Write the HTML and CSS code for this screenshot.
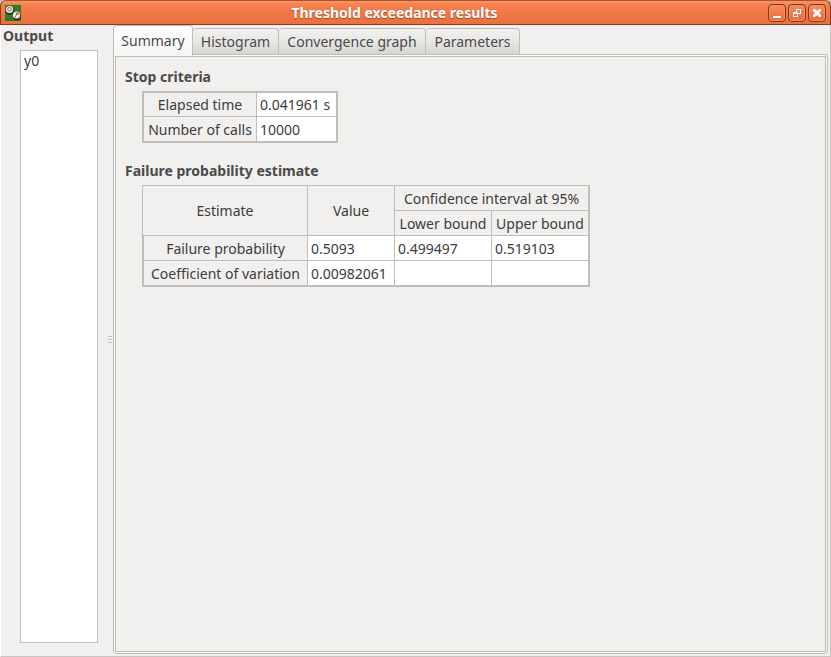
FILE: index.html
```html
<!DOCTYPE html>
<html lang="en">
<head>
<meta charset="utf-8">
<title>Threshold exceedance results</title>
<link rel="stylesheet" href="styles.css">
</head>
<body>
<div class="window">
  <header class="titlebar">
    <svg class="app-icon" viewBox="0 0 16 16" aria-hidden="true">
      <rect width="16" height="16" fill="#2f7d28"/>
      <ellipse cx="5" cy="6" rx="4.6" ry="4" fill="#1d3d18"/>
      <ellipse cx="12" cy="11.5" rx="4" ry="3.8" fill="#1d3d18"/>
      <circle cx="4.5" cy="4.5" r="3.6" fill="#f4eeea"/>
      <circle cx="4.5" cy="4.3" r="1.8" fill="none" stroke="#c8383a"/>
      <circle cx="11.5" cy="10" r="3.6" fill="#f4eeea"/>
      <path d="M10 12.5l2.5-5M11 8.5l2.5-.5-.5 2" fill="none" stroke="#d0403c"/>
    </svg>
    <h1 class="title">Threshold exceedance results</h1>
    <div class="controls">
      <button class="control" type="button" aria-label="Minimize"><svg viewBox="0 0 16 16"><path d="M4 11h8v2H4z"/></svg></button>
      <button class="control" type="button" aria-label="Restore"><svg viewBox="0 0 16 16"><path fill-rule="evenodd" d="M7 4h5v5h-3v3H4V7h3zM8 5v2h1v1h2V5zM5 9v2h3V9z"/></svg></button>
      <button class="control" type="button" aria-label="Close"><svg viewBox="0 0 16 16"><path d="M4 4h2l2 2 2-2h2v2l-2 2 2 2v2h-2l-2-2-2 2H4v-2l2-2-2-2z"/></svg></button>
    </div>
  </header>
  <main class="content">
    <aside class="sidebar">
      <h2 class="heading" id="output-label">Output</h2>
      <ul class="outputs" aria-labelledby="output-label"><li>y0</li></ul>
    </aside>
    <div class="splitter"><i></i><i></i><i></i></div>
    <section class="results">
      <div class="tabs" role="tablist">
        <button class="tab active" type="button" role="tab" aria-selected="true">Summary</button>
        <button class="tab tab-histogram" type="button" role="tab">Histogram</button>
        <button class="tab tab-convergence" type="button" role="tab">Convergence graph</button>
        <button class="tab tab-parameters" type="button" role="tab">Parameters</button>
      </div>
      <div class="frame">
        <div class="panel" role="tabpanel">
          <h2 class="heading">Stop criteria</h2>
          <table class="grid stop">
            <colgroup><col class="c-name"><col class="c-data"></colgroup>
            <tbody>
              <tr><th scope="row">Elapsed time</th><td>0.041961 s</td></tr>
              <tr><th scope="row">Number of calls</th><td>10000</td></tr>
            </tbody>
          </table>
          <h2 class="heading">Failure probability estimate</h2>
          <table class="grid estimate">
            <colgroup><col class="c-label"><col class="c-value"><col class="c-bound"><col class="c-bound"></colgroup>
            <thead>
              <tr><th rowspan="2">Estimate</th><th rowspan="2">Value</th><th colspan="2">Confidence interval at 95%</th></tr>
              <tr><th>Lower bound</th><th>Upper bound</th></tr>
            </thead>
            <tbody>
              <tr><th scope="row">Failure probability</th><td>0.5093</td><td>0.499497</td><td>0.519103</td></tr>
              <tr><th scope="row">Coefficient of variation</th><td>0.00982061</td><td></td><td></td></tr>
            </tbody>
          </table>
        </div>
      </div>
    </section>
  </main>
</div>
</body>
</html>
```
FILE: styles.css
```css
* { box-sizing: border-box; }

body {
  margin: 0;
  background: #c9c6c2;
  color: #3c3c3c;
  font: 14px/20px "Noto Sans", "Open Sans", sans-serif;
}

h1, h2, ul { margin: 0; padding: 0; }
button { font: inherit; color: inherit; }

.window {
  display: flex;
  flex-direction: column;
  height: 100vh;
}

.titlebar {
  display: flex;
  align-items: center;
  height: 25px;
  flex: none;
  padding: 1px 4px 0;
  border: 1px solid #8c3c1c;
  border-top-color: #a85430;
  border-radius: 6px 6px 0 0;
  background: linear-gradient(#fb9464, #f5834f 15%, #f07746 50%, #eb7040);
}

.app-icon { width: 16px; height: 16px; }

.title {
  flex: 1;
  color: #fff;
  font-size: 14px;
  text-align: center;
  text-shadow: 0 1px 1px #a04a24;
}

.controls { display: flex; gap: 2px; }

.control {
  width: 18px;
  height: 18px;
  padding: 0;
  border: 1px solid #7f391e;
  border-radius: 4px;
  background: linear-gradient(#f78b5c, #ec6b3b);
  box-shadow: inset 0 0 0 1px #f58e62;
}

.control svg { display: block; width: 16px; height: 16px; fill: #fff; }

.content {
  display: flex;
  flex: 1;
  min-height: 0;
  border: 1px solid #c9c6c2;
  border-width: 0 1px 1px;
  border-left-color: #fff;
  background: #f1f0ee;
}

.sidebar {
  display: flex;
  flex-direction: column;
  width: 97px;
  padding: 1px 0 13px;
}

.heading { color: #4a4a4a; font-size: 14px; font-weight: 700; }
.sidebar .heading { padding-left: 2px; }

.outputs {
  flex: 1;
  margin: 4px 0 0 19px;
  padding: 0 3px;
  border: 1px solid #bfbdb8;
  background: #fff;
  list-style: none;
}

.splitter {
  display: flex;
  flex-direction: column;
  align-items: flex-end;
  justify-content: center;
  gap: 2px;
  width: 15px;
  padding: 0 1px 2px 0;
}

.splitter i { width: 4px; height: 1px; background: #c9c7c3; }

.results {
  display: flex;
  flex: 1;
  flex-direction: column;
  min-width: 0;
  padding: 0 2px 2px 0;
}

.tabs { display: flex; align-items: flex-end; height: 29px; }

.tab {
  height: 26px;
  padding: 0;
  border: 1px solid #bfbdb8;
  border-left-width: 0;
  border-bottom: 0;
  border-radius: 4px 4px 0 0;
  background: linear-gradient(#f2f1f0, #e9e8e6 45%, #d7d5d2);
  color: #4a4a4a;
  white-space: nowrap;
}

.tab.active {
  position: relative;
  width: 80px;
  height: 31px;
  margin-bottom: -2px;
  padding-bottom: 1px;
  border-left-width: 1px;
  background: linear-gradient(#fff, #f6f5f4);
}

.tab-histogram { width: 86px; }
.tab-convergence { width: 147px; }
.tab-parameters { width: 94px; }

.frame {
  display: flex;
  flex: 1;
  padding: 1px;
  border: 1px solid #bfbdb8;
  border-radius: 0 3px 3px 3px;
  background: #fafaf9;
}

.panel {
  flex: 1;
  padding: 10px 9px;
  border: 1px solid #bfbdb8;
  background: #f1f0ee;
}

.grid {
  table-layout: fixed;
  border-collapse: separate;
  border-spacing: 0;
  border: 1px solid #c1beba;
  margin: 4px 0 18px 17px;
}

.grid th, .grid td {
  height: 25px;
  padding: 2px 3px 0;
  border: 0 solid #c1beba;
  border-width: 0 1px 1px 0;
  font-weight: 400;
  white-space: nowrap;
}

.grid th { padding: 2px 0 0; text-align: center; }
.grid td { background: #fff; text-align: left; }
.grid tbody th { border-left-width: 1px; }
.grid th[rowspan] { padding-top: 0; }

.stop { width: 196px; }
.stop tr:first-child > * { padding-top: 0; border-top-width: 1px; }
.estimate { width: 448px; }
.c-name { width: 114px; }
.c-data { width: 80px; }
.c-label { width: 165px; }
.c-value { width: 87px; }
.c-bound { width: 97px; }
```
